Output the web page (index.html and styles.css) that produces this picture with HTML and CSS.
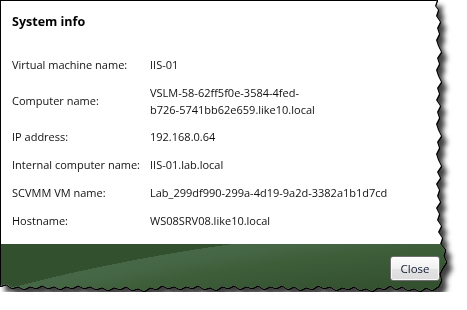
FILE: index.html
```html
<!DOCTYPE html>
<html lang="en">
<head>
    <meta charset="UTF-8">
    <meta name="viewport" content="width=device-width, initial-scale=1.0">
    <title>System info</title>
    <link rel="stylesheet" href="styles.css">
</head>
<body>
    <div class="shot">
        <div class="dialog">
            <h1 class="title">System info</h1>

            <div class="info">
                <div class="label">Virtual machine name:</div>
                <div class="value">IIS-01</div>

                <div class="label">Computer name:</div>
                <div class="value">VSLM-58-62ff5f0e-3584-4fed-<br>b726-5741bb62e659.like10.local</div>

                <div class="label">IP address:</div>
                <div class="value">192.168.0.64</div>

                <div class="label">Internal computer name:</div>
                <div class="value">IIS-01.lab.local</div>

                <div class="label">SCVMM VM name:</div>
                <div class="value">Lab_299df990-299a-4d19-9a2d-3382a1b1d7cd</div>

                <div class="label">Hostname:</div>
                <div class="value">WS08SRV08.like10.local</div>
            </div>

            <div class="footer">
                <button class="close-button">Close</button>
            </div>
        </div>
    </div>
</body>
</html>
```

FILE: styles.css
```css
body {
    margin: 0;
    background-color: #fff;
    font-family: "Open Sans", "Noto Sans", sans-serif;
    color: #111;
}

/* torn-paper screenshot frame: outline + drop shadow follow the clip shape */
.shot {
    width: 447px;
    filter: drop-shadow(1px 0 0 #000) drop-shadow(0 1px 0 #000) drop-shadow(5px 6px 2.5px rgba(0, 0, 0, 0.75));
}

.dialog {
    box-sizing: border-box;
    width: 447px;
    height: 292px;
    display: flex;
    flex-direction: column;
    background-color: #fff;
    border-left: 1px solid #000;
    border-top: 1px solid #000;
    clip-path: polygon(0 0, 437px 0, 435px 6px, 438px 10px, 436px 16px, 440px 22px, 437px 28px, 439px 34px, 436px 40px, 438px 46px, 441px 52px, 437px 58px, 439px 64px, 436px 70px, 438px 76px, 441px 82px, 437px 88px, 439px 94px, 436px 100px, 440px 106px, 437px 112px, 439px 118px, 436px 124px, 438px 130px, 441px 136px, 437px 142px, 439px 148px, 436px 154px, 438px 160px, 441px 166px, 437px 172px, 440px 178px, 436px 184px, 439px 190px, 437px 196px, 440px 202px, 436px 208px, 439px 214px, 437px 220px, 441px 226px, 438px 232px, 442px 238px, 440px 244px, 445px 250px, 443px 256px, 446px 262px, 442px 268px, 439px 274px, 441px 280px, 438px 286px, 432px 290px, 426px 287px, 420px 291px, 414px 288px, 408px 290px, 402px 286px, 396px 289px, 390px 285px, 384px 289px, 378px 287px, 372px 291px, 366px 288px, 360px 290px, 354px 286px, 348px 289px, 342px 287px, 336px 290px, 330px 286px, 324px 288px, 318px 285px, 312px 289px, 306px 287px, 300px 290px, 294px 286px, 288px 289px, 282px 285px, 276px 288px, 270px 286px, 264px 289px, 258px 285px, 252px 288px, 246px 286px, 240px 289px, 234px 285px, 228px 288px, 222px 286px, 216px 290px, 210px 287px, 204px 289px, 198px 285px, 192px 288px, 186px 286px, 180px 289px, 174px 286px, 168px 288px, 162px 285px, 156px 289px, 150px 287px, 144px 291px, 138px 288px, 132px 290px, 126px 286px, 120px 289px, 114px 287px, 108px 290px, 102px 287px, 96px 289px, 90px 286px, 84px 288px, 78px 285px, 72px 288px, 66px 286px, 60px 289px, 54px 286px, 48px 288px, 42px 285px, 36px 288px, 30px 286px, 24px 289px, 18px 286px, 12px 288px, 6px 284px, 0 286px);
}

.title {
    margin: 0;
    padding: 12px 0 0 11px;
    font-size: 12.5px;
    font-weight: 700;
    line-height: 18px;
    color: #000;
}

.info {
    display: grid;
    grid-template-columns: 138px 1fr;
    row-gap: 9px;
    align-items: center;
    margin-top: 24px;
    padding-left: 11px;
    font-size: 11px;
    line-height: 17px;
}

.label,
.value {
    min-height: 18px;
    display: flex;
    align-items: center;
    white-space: nowrap;
}

.value {
    display: block;
    line-height: 17px;
    padding: 0.5px 0;
}

.footer {
    box-sizing: border-box;
    height: 48px;
    margin-top: auto;
    display: flex;
    justify-content: flex-end;
    align-items: flex-start;
    padding: 12px 7px 0 0;
    background:
        radial-gradient(ellipse 959px 325px at 600px 300px,
            #33502e 0, #34512f 82%, #3a5936 89%, #3e5e3a 93%, #456644 97%, #466846 100%, transparent 100%),
        #33502e;
}

.close-button {
    width: 50px;
    height: 25px;
    padding: 0;
    font-family: inherit;
    font-size: 11.5px;
    color: #0f1a33;
    background: linear-gradient(#fdfdfd, #f1f1f1 50%, #e3e3e3 51%, #dcdcdc);
    border: 1px solid #707070;
    border-radius: 3px;
    box-shadow: inset 0 0 0 1px rgba(255, 255, 255, 0.8);
    cursor: pointer;
}
```
